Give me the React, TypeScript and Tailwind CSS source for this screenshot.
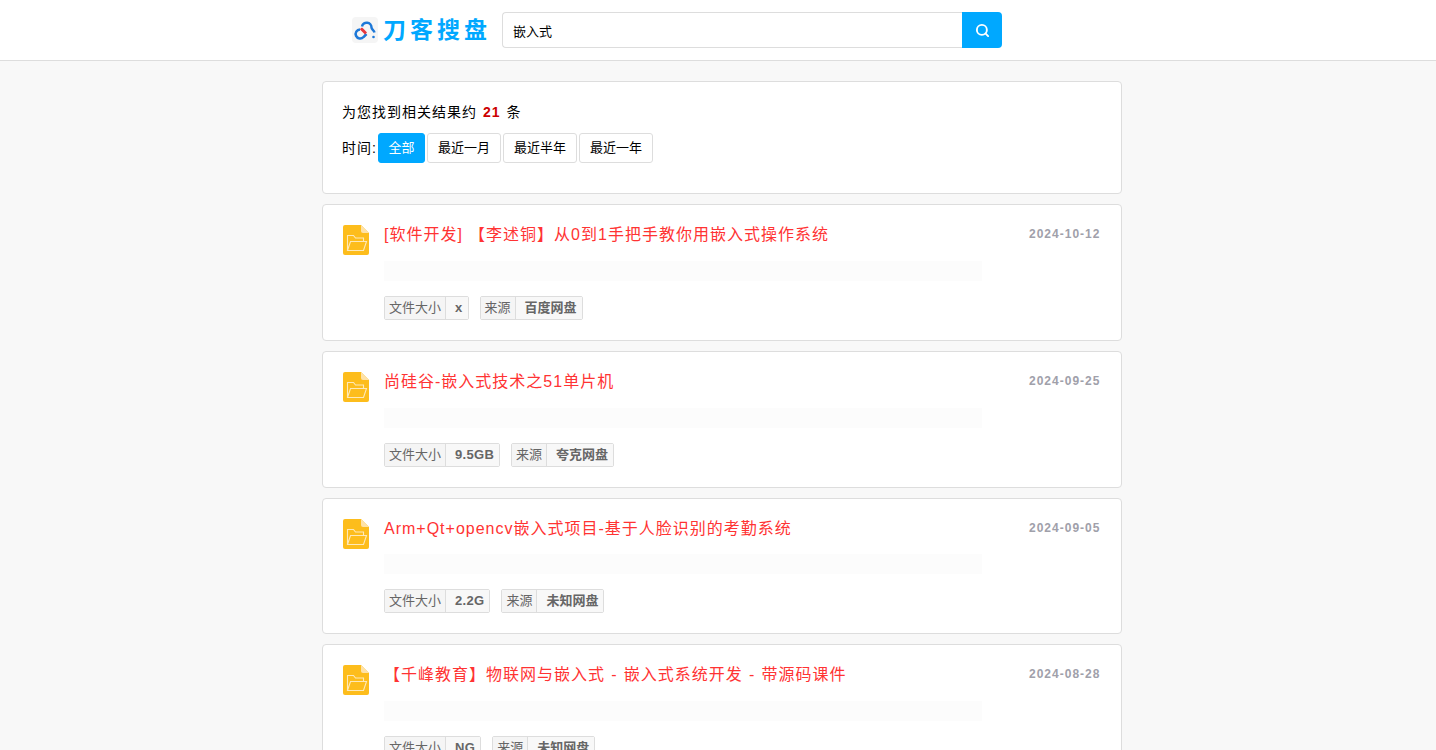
import React from 'react';
import { Search } from 'lucide-react';

const results = [
  { title: '[软件开发] 【李述铜】从0到1手把手教你用嵌入式操作系统', date: '2024-10-12', size: 'x', source: '百度网盘' },
  { title: '尚硅谷-嵌入式技术之51单片机', date: '2024-09-25', size: '9.5GB', source: '夸克网盘' },
  { title: 'Arm+Qt+opencv嵌入式项目-基于人脸识别的考勤系统', date: '2024-09-05', size: '2.2G', source: '未知网盘' },
  { title: '【千峰教育】物联网与嵌入式 - 嵌入式系统开发 - 带源码课件', date: '2024-08-28', size: 'NG', source: '未知网盘' },
];

const FileIcon = () => (
  <svg width="26" height="30" viewBox="0 0 26 30" className="shrink-0">
    <path d="M2 0H18L26 8V28a2 2 0 0 1-2 2H2a2 2 0 0 1-2-2V2a2 2 0 0 1 2-2Z" fill="#fdbd1c" />
    <path d="M18 0L26 8H20a2 2 0 0 1-2-2Z" fill="#fee2a8" />
    <path
      d="M4.500 25.500V10.500h6l2 2.500h8v3.500M4.500 25.500l3-9h16l-3 9Z"
      fill="none"
      stroke="#fee9b8"
      strokeWidth="1.100"
    />
  </svg>
);

const Logo = () => (
  <svg width="26" height="26" viewBox="0 0 26 26" className="shrink-0">
    <rect width="26" height="26" rx="4" fill="#f5f5f5" />
    <path d="M8 12.500a4.500 4.500 0 1 0 3.500 7.500l3-3" fill="none" stroke="#1d78d8" strokeWidth="2.500" />
    <path d="M10 9.500a4.800 4.800 0 0 1 9.500 1c0 2 2.500 2.500 3 5" fill="none" stroke="#1d78d8" strokeWidth="2.500" />
    <path d="M10 10.500c-1 .5-1.500 1-2 2l5 5 2 -2c-1.500-1.500-3-3.500-5-5Z" fill="#e8383d" />
    <circle cx="21.500" cy="20" r="1.300" fill="#1d78d8" />
  </svg>
);

const Tag = ({ label, value, wide }: { label: string; value: string; wide?: boolean }) => (
  <div className="flex h-6 rounded-[2px] border border-[#ddd] text-[13px] leading-[22px] text-[#666]">
    <span className="border-r border-[#ddd] bg-[#f5f5f5] px-1">{label}</span>
    <span className={wide ? 'bg-[#f8f8f8] pr-[5px] pl-[9px] font-bold tracking-[0.3px]' : 'bg-[#f8f8f8] pr-[5px] pl-[9px] font-bold'}>{value}</span>
  </div>
);

const App: React.FC = () => {
  const ranges = ['最近一月', '最近半年', '最近一年'];

  return (
    <div className="h-screen overflow-hidden bg-[#f8f8f8] font-['Liberation_Sans','Noto_Sans_CJK_SC',sans-serif] text-black">
      <header className="h-[61px] border-b border-[#ddd] bg-white">
        <div className="ml-[352px] flex h-full items-center">
          <Logo />
          <span className="ml-[5px] w-[119px] text-[23px] leading-none font-bold tracking-[4px] text-[#00a8ff]">刀客搜盘</span>
          <div className="flex h-9 w-[500px]">
            <input
              defaultValue="嵌入式"
              className="h-full min-w-0 flex-1 rounded-l border border-r-0 border-[#ddd] bg-white px-[10px] text-[13px] text-black outline-none"
            />
            <button className="flex h-full w-10 items-center justify-center rounded-r bg-[#00a8ff] text-white">
              <Search size={15} strokeWidth={3} />
            </button>
          </div>
        </div>
      </header>

      <main className="ml-[322px] w-[800px] pt-5">
        <section className="mb-2.5 h-[113.2px] rounded border border-[#ddd] bg-white px-[19px] pt-5">
          <p className="text-sm leading-5 tracking-[1px]">
            为您找到相关结果约
            <b className="mx-[6px] tracking-[1px] text-[#cc0000]">21</b>
            条
          </p>
          <div className="mt-[11px] flex items-center text-sm">
            <span className="w-9 tracking-[1px]">时间:</span>
            <button className="h-[30px] w-[47px] rounded-[3px] border border-[#00a8ff] bg-[#00a8ff] text-[13px] text-white">全部</button>
            {ranges.map((r) => (
              <button key={r} className="ml-[2px] h-[30px] w-[74px] rounded-[3px] border border-[#ddd] bg-white text-[13px]">
                {r}
              </button>
            ))}
          </div>
        </section>

        {results.map((item) => (
          <article key={item.date} className="mb-2.5 flex rounded border border-[#ddd] bg-white pt-5 pr-[20.6px] pb-[19.87px] pl-5">
            <FileIcon />
            <div className="ml-[15px] min-w-0 flex-1">
              <div className="flex items-start justify-between">
                <h3 className="text-base leading-5 font-normal tracking-[1px] [word-spacing:0.75px] text-[#ff3333]">{item.title}</h3>
                <span className="text-xs leading-[18px] font-bold tracking-[1px] text-[#a0a0aa]">{item.date}</span>
              </div>
              <div className="mt-[15.8px] h-5 w-[598px] bg-[#fcfcfc]" />
              <div className="mt-[15px] flex gap-[11px]">
                <Tag label="文件大小" value={item.size} wide />
                <Tag label="来源" value={item.source} />
              </div>
            </div>
          </article>
        ))}
      </main>
    </div>
  );
};

export default App;
